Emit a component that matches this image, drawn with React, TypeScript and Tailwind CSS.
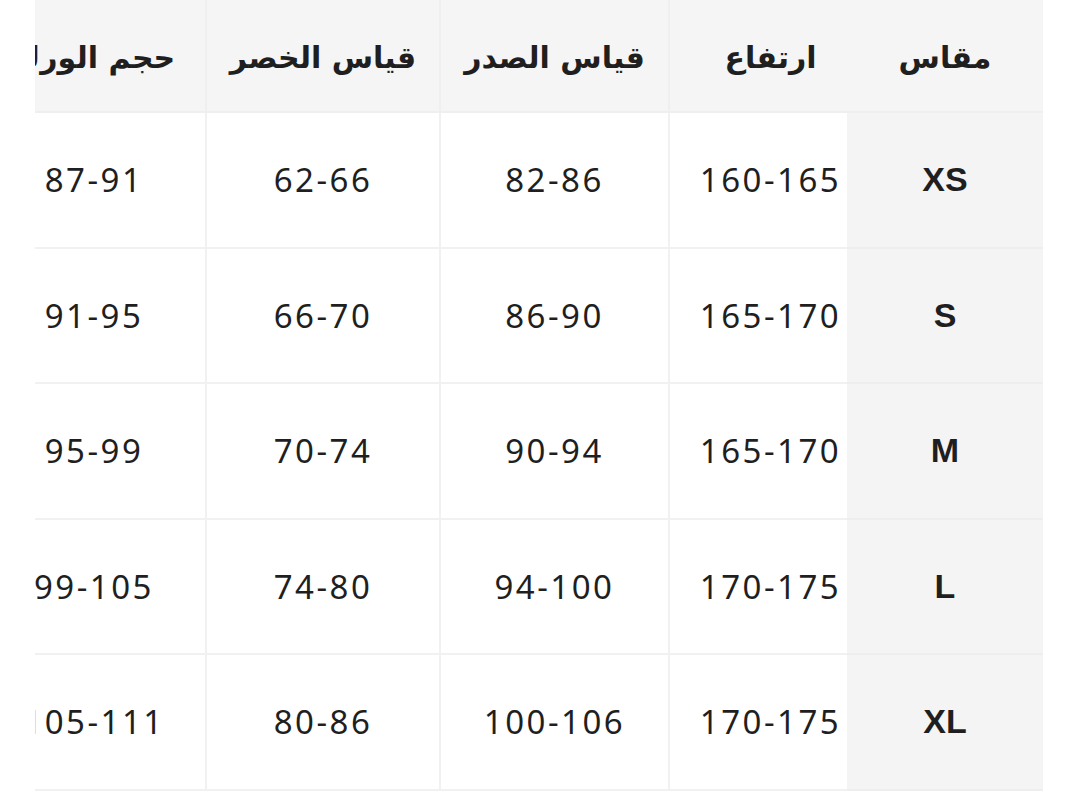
const columns = [
  { key: 'size', label: 'مقاس', width: 'w-[196px]', pad: '' },
  { key: 'height', label: 'ارتفاع', width: 'w-[177px]', pad: 'pl-[24px]' },
  { key: 'chest', label: 'قياس الصدر', width: 'w-[229px]', pad: '' },
  { key: 'waist', label: 'قياس الخصر', width: 'w-[234px]', pad: '' },
  { key: 'hip', label: 'حجم الورك', width: 'w-[224px]', pad: '' },
];

const rows = [
  { size: 'XS', height: '160-165', chest: '82-86', waist: '62-66', hip: '87-91' },
  { size: 'S', height: '165-170', chest: '86-90', waist: '66-70', hip: '91-95' },
  { size: 'M', height: '165-170', chest: '90-94', waist: '70-74', hip: '95-99' },
  { size: 'L', height: '170-175', chest: '94-100', waist: '74-80', hip: '99-105' },
  { size: 'XL', height: '170-175', chest: '100-106', waist: '80-86', hip: '105-111' },
];

const arabicFont = { fontFamily: '"DejaVu Sans", "Noto Sans", sans-serif' };

export default function App() {
  return (
    <div className="w-[1080px] h-[795px] bg-white overflow-hidden">
      <div dir="rtl" className="ml-[35px] w-[1008px] overflow-hidden text-[#1f1f1f]">
        <div className="flex w-max">
          {columns.map((col, i) => (
            <div
              key={col.key}
              className={`${col.width} ${col.pad} shrink-0 flex items-center justify-center h-[113px] pt-[3px] bg-[#f5f5f5] border-b-2 border-[#efefef] text-[30px] font-bold ${
                i > 1 ? 'border-r-2' : ''
              }`}
              style={arabicFont}
            >
              <span className="whitespace-nowrap">{col.label}</span>
            </div>
          ))}
        </div>
        {rows.map((row) => (
          <div key={row.size} className="flex w-max">
            {columns.map((col, i) => {
              const value = row[col.key as keyof typeof row];
              if (i === 0) {
                return (
                  <div
                    key={col.key}
                    className={`${col.width} shrink-0 flex items-center justify-center h-[135.5px] bg-[#f4f4f4] border-b-2 border-[#eeeeee] font-['Liberation_Sans',sans-serif] font-bold text-[34px]`}
                  >
                    {value}
                  </div>
                );
              }
              return (
                <div
                  key={col.key}
                  dir="ltr"
                  className={`${col.width} ${col.pad} shrink-0 flex items-center justify-center h-[135.5px] bg-white border-b-2 border-[#f1f1f1] font-['Noto_Sans',sans-serif] text-[33px] tracking-[2.5px] ${
                    i > 1 ? 'border-r-2 border-r-[#f1f1f1]' : ''
                  }`}
                >
                  <span className="whitespace-nowrap">{value}</span>
                </div>
              );
            })}
          </div>
        ))}
      </div>
    </div>
  );
}
